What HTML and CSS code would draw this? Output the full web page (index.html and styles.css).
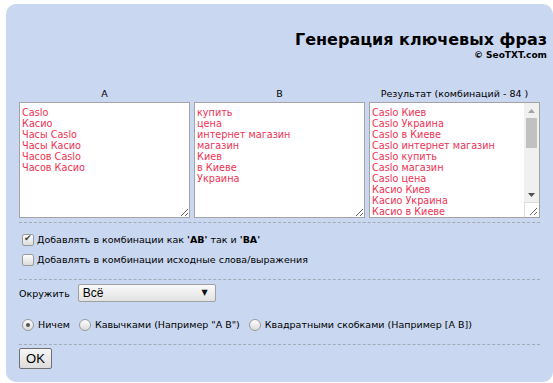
FILE: index.html
```html
<!DOCTYPE html>
<html>
<head>
    <meta charset="utf-8">
    <title>Генерация ключевых фраз</title>
    <link rel="stylesheet" href="styles.css">
</head>
<body>
    <div class="panel">
        <div class="panel__head">
            <h1 class="panel__title">Генерация ключевых фраз</h1>
            <div class="panel__copy">© SeoTXT.com</div>
        </div>
        <form class="gen">
            <div class="gen__cols">
                <div class="gen__col">
                    <div class="gen__label">A</div>
                    <textarea class="gen__area">Caslo
Касио
Часы Caslo
Часы Касио
Часов Caslo
Часов Касио</textarea>
                </div>
                <div class="gen__col">
                    <div class="gen__label">B</div>
                    <textarea class="gen__area">купить
цена
интернет магазин
магазин
Киев
в Киеве
Украина</textarea>
                </div>
                <div class="gen__col">
                    <div class="gen__label">Результат (комбинаций - 84 )</div>
                    <div class="gen__box">
                        <textarea class="gen__area gen__area--result">Caslo Киев
Caslo Украина
Caslo в Киеве
Caslo интернет магазин
Caslo купить
Caslo магазин
Caslo цена
Касио Киев
Касио Украина
Касио в Киеве
Касио интернет магазин
Касио купить
Касио магазин
Касио цена
Киев Caslo
Киев Касио
Киев Часов Caslo
Киев Часов Касио
Киев Часы Caslo
Киев Часы Касио
Украина Caslo
Украина Касио
Украина Часов Caslo
Украина Часов Касио
Украина Часы Caslo
Украина Часы Касио
Часов Caslo Киев
Часов Caslo Украина
Часов Caslo в Киеве
Часов Caslo интернет магазин
Часов Caslo купить
Часов Caslo магазин
Часов Caslo цена</textarea>
                        <!-- полоса прокрутки рисуем сами -->
                        <div class="scroll">
                            <div class="scroll__btn">
                                <svg width="7" height="4" viewBox="0 0 7 4"><path d="M0 4 L3.5 0 L7 4 Z" fill="#a3a3a3"/></svg>
                            </div>
                            <div class="scroll__track"><div class="scroll__thumb"></div></div>
                            <div class="scroll__btn">
                                <svg width="7" height="4" viewBox="0 0 7 4"><path d="M0 0 L7 0 L3.5 4 Z" fill="#505050"/></svg>
                            </div>
                            <div class="scroll__grip">
                                <svg width="8" height="8" viewBox="0 0 8 8"><path d="M8 1 L1 8 M8 5 L5 8" stroke="#6e6e6e" stroke-width="1"/></svg>
                            </div>
                        </div>
                    </div>
                </div>
            </div>

            <div class="gen__row gen__row--checks">
                <label class="gen__opt"><input type="checkbox" class="gen__check" checked> Добавлять в комбинации как <b>'AB'</b> так и <b>'BA'</b></label>
                <label class="gen__opt"><input type="checkbox" class="gen__check"> Добавлять в комбинации исходные слова/выражения</label>
            </div>

            <div class="gen__wrap">
                <span class="gen__text">Окружить</span>
                <span class="gen__select">
                    <select class="gen__select-box">
                        <option>Всё</option>
                        <option>Только A</option>
                        <option>Только B</option>
                    </select>
                </span>
            </div>

            <div class="gen__row gen__row--radios">
                <label class="gen__opt"><input type="radio" name="wrap" class="gen__radio" checked> Ничем</label>
                <label class="gen__opt"><input type="radio" name="wrap" class="gen__radio"> Кавычками (Например "A B")</label>
                <label class="gen__opt"><input type="radio" name="wrap" class="gen__radio"> Квадратными скобками (Например [A B])</label>
            </div>

            <div class="gen__submit">
                <button type="button" class="gen__btn">OK</button>
            </div>
        </form>
    </div>
</body>
</html>
```

FILE: styles.css
```css
* {
    margin: 0;
    padding: 0;
    box-sizing: border-box;
}
body {
    background: #fff;
    font-family: "DejaVu Sans", Verdana, sans-serif;
    font-size: 9.5px;
    color: #000;
}
.panel {
    width: 547px;
    height: 378px;
    margin: 4px 0 0 6px;
    padding: 0 6px 0 13px;
    background: #c9d7f0;
    border-radius: 10px;
}
.panel__head {
    padding-top: 27px;
    text-align: right;
}
.panel__title {
    font-size: 16px;
    font-weight: bold;
    line-height: 17px;
}
.panel__copy {
    font-size: 9px;
    font-weight: bold;
    line-height: 10px;
    margin-top: 2px;
}
.gen {
    width: 521px;
    margin-top: 28px;
}
.gen__cols {
    display: grid;
    grid-template-columns: repeat(3, 171px);
    gap: 4px;
    padding-bottom: 4px;
    border-bottom: 1px dashed #a3aab8;
}
.gen__label {
    text-align: center;
    line-height: 12px;
    margin-bottom: 2px;
}
.gen__area {
    display: block;
    width: 171px;
    height: 116px;
    padding: 4px 2px 3px;
    border: 1px solid #a4a4a4;
    font-family: "DejaVu Sans", Verdana, sans-serif;
    font-size: 9.7px;
    line-height: 11px;
    color: #ee3355;
    background: #fff;
    resize: both;
    overflow-y: auto;
}
.gen__box {
    display: flex;
    width: 171px;
    height: 116px;
    border: 1px solid #a4a4a4;
    background: #fff;
}
.gen__area--result {
    flex: 1;
    width: auto;
    height: 100%;
    border: 0;
    resize: none;
    overflow: hidden;
}
.scroll {
    display: flex;
    flex-direction: column;
    width: 15px;
    background: #f0f0f0;
}
.scroll__btn {
    height: 15px;
    display: flex;
    align-items: center;
    justify-content: center;
}
.scroll__btn svg {
    display: block;
}
.scroll__track {
    flex: 1;
}
.scroll__thumb {
    height: 30px;
    margin: 0 2px;
    background: #c1c1c1;
}
.scroll__grip {
    height: 15px;
    display: flex;
    align-items: flex-end;
    justify-content: flex-end;
    padding: 0 2px 2px 0;
    background: #fff;
    border-top: 1px solid #dcdcdc;
    border-left: 1px solid #dcdcdc;
}
.gen__row {
    border-bottom: 1px dashed #a3aab8;
}
.gen__row--checks {
    padding: 9px 0 11px;
}
.gen__opt {
    display: flex;
    align-items: center;
    gap: 3px;
    line-height: 16px;
    white-space: nowrap;
}
.gen__row--checks .gen__opt + .gen__opt {
    margin-top: 4px;
}
.gen__check,
.gen__radio {
    appearance: none;
    width: 12px;
    height: 12px;
    margin: 0 0 0 3px;
    border: 1px solid #9a9a9a;
    background: linear-gradient(#fdfdfd, #dcdcdc);
    position: relative;
}
.gen__check {
    border-radius: 2px;
}
.gen__check:checked::before {
    content: "✔";
    position: absolute;
    left: 1px;
    top: -2px;
    font-size: 9px;
    color: #444;
}
.gen__radio {
    border-radius: 50%;
}
.gen__radio:checked::before {
    content: "";
    position: absolute;
    left: 3px;
    top: 3px;
    width: 4px;
    height: 4px;
    border-radius: 50%;
    background: #555;
}
.gen__wrap {
    display: flex;
    align-items: center;
    gap: 8px;
    padding: 4px 0 15px;
}
.gen__select {
    position: relative;
    display: inline-block;
}
.gen__select::after {
    content: "▼";
    position: absolute;
    right: 8px;
    top: 4px;
    font-size: 8px;
    color: #111;
    pointer-events: none;
}
.gen__select-box {
    display: block;
    appearance: none;
    width: 138px;
    height: 18px;
    padding: 0 4px;
    border: 1px solid #a0a0a0;
    border-radius: 2px;
    background: linear-gradient(#fafafa, #e2e2e2);
    font-family: "Liberation Sans", Arial, sans-serif;
    font-size: 12px;
    color: #000;
}
.gen__row--radios {
    display: flex;
    gap: 6px;
    padding-bottom: 11px;
}
.gen__row--radios .gen__opt {
    gap: 4px;
}
.gen__submit {
    padding-top: 3px;
}
.gen__btn {
    width: 33px;
    height: 21px;
    border: 1px solid #707070;
    border-radius: 2px;
    background: linear-gradient(#f6f6f6, #dddddd);
    font-family: "Liberation Sans", Arial, sans-serif;
    font-size: 13px;
    color: #000;
}
```
